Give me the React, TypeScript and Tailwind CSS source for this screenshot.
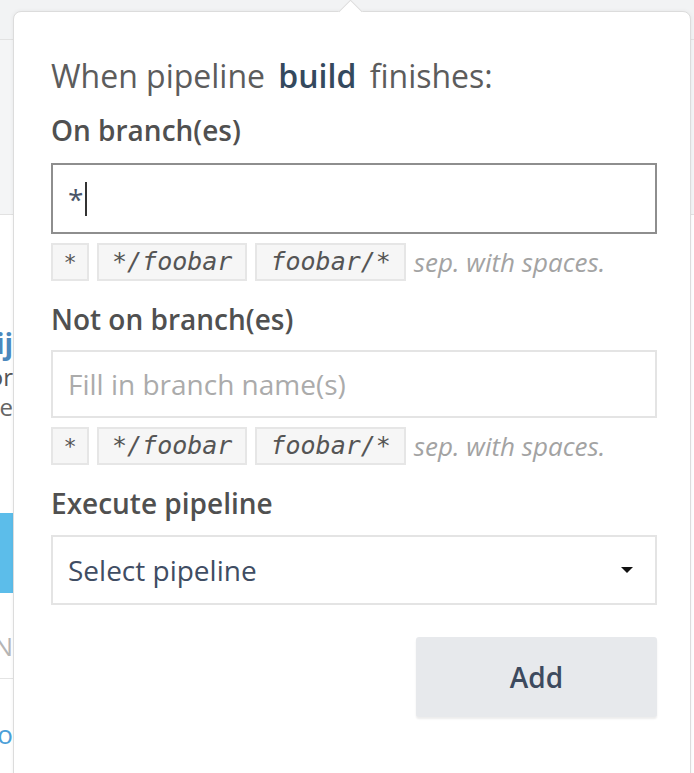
import React from "react";

const sans = { fontFamily: "'Open Sans', 'Noto Sans', sans-serif" };
const mono = { fontFamily: "'DejaVu Sans Mono', 'Liberation Mono', monospace" };

const Chips: React.FC = () => (
    <div className="flex items-center gap-[8px] h-[38px]">
        <span
            style={mono}
            className="h-[38px] w-[38px] flex items-center justify-center bg-[#f6f6f6] border-2 border-[#e6e6e6] text-[#555] italic text-[22px]"
        >
            *
        </span>
        {["*/foobar", "foobar/*"].map((c) => (
            <span
                key={c}
                style={mono}
                className="h-[38px] flex items-center px-[13px] bg-[#f6f6f6] border-2 border-[#e6e6e6] text-[#555] italic text-[25px]"
            >
                {c}
            </span>
        ))}
        <span style={sans} className="italic text-[26px] text-[#a3a3a3]">
            sep. with spaces.
        </span>
    </div>
);

const Label: React.FC<{ children: React.ReactNode; mt: string }> = ({ children, mt }) => (
    <div style={sans} className={`${mt} h-[36px] leading-[36px] text-[28px] font-semibold text-[#505050]`}>
        {children}
    </div>
);

export default function App() {
    return (
        <div className="relative w-[694px] h-[773px] overflow-hidden bg-white">
            {/* page behind the popover */}
            <div style={sans} className="w-[694px] h-[773px] flex flex-col">
                <div className="h-[40px] bg-[#f2f3f4] border-b border-[#e2e2e2]" />
                <div className="h-[175px] bg-[#f4f5f6] border-b border-[#e2e2e2]" />
                <div className="w-[13px] overflow-hidden flex flex-col">
                    <div className="h-[146px] flex items-end justify-end whitespace-nowrap text-[28px] font-bold text-[#4b88bd] leading-[36px]">
                        Pipelij
                    </div>
                    <div className="h-[32px] flex justify-end whitespace-nowrap text-[24px] text-[#555] leading-[32px]">
                        Monitor
                    </div>
                    <div className="h-[28px] flex justify-end whitespace-nowrap text-[24px] text-[#666] leading-[28px]">
                        Pipeline
                    </div>
                    <div className="mt-[92px] h-[80px] bg-[#5cbdea]" />
                    <div className="mt-[33px] h-[40px] flex justify-end whitespace-nowrap text-[26px] text-[#b5b5b5] leading-[40px]">
                        N
                    </div>
                    <div className="h-[13px] border-b border-[#e4e4e4]" />
                    <div className="mt-[37px] h-[36px] flex justify-end whitespace-nowrap text-[26px] text-[#4b9fd8] leading-[36px]">
                        No
                    </div>
                </div>
            </div>

            {/* popover */}
            <div className="absolute left-[13px] top-[11px] w-[678px] h-[800px] bg-white border border-[#dcdcdc] rounded-[8px] shadow-[0_0_4px_rgba(0,0,0,0.06)]">
                <div className="absolute left-[328px] top-[-9px] w-[17px] h-[17px] bg-white border-l border-t border-[#dcdcdc] rotate-45" />
                <div className="relative flex flex-col pl-[37px] pr-[33px] pt-[44px]">
                    <div style={sans} className="h-[40px] leading-[40px] text-[32px] text-[#5c5c5c] whitespace-nowrap">
                        When pipeline <span className="font-semibold text-[#34495e] mx-[5px]">build</span> finishes:
                    </div>

                    <Label mt="mt-[16px]">On branch(es)</Label>
                    <div
                        style={sans}
                        className="mt-[15px] h-[71px] border-2 border-[#8e8e8e] flex items-center pl-[15px] text-[28px] text-[#4a5568]"
                    >
                        *<span className="ml-[2px] w-[2px] h-[34px] bg-[#333]" />
                    </div>
                    <div className="mt-[9px]">
                        <Chips />
                    </div>

                    <Label mt="mt-[20px]">Not on branch(es)</Label>
                    <div
                        style={sans}
                        className="mt-[13px] h-[68px] border-2 border-[#e4e4e4] flex items-center pl-[15px] text-[28px] text-[#ababab]"
                    >
                        Fill in branch name(s)
                    </div>
                    <div className="mt-[9px]">
                        <Chips />
                    </div>

                    <Label mt="mt-[20px]">Execute pipeline</Label>
                    <div
                        style={sans}
                        className="mt-[14px] h-[70px] border-2 border-[#e4e4e4] flex items-center justify-between pl-[15px] pr-[22px] text-[28px] text-[#3f4d63]"
                    >
                        <span>Select pipeline</span>
                        <svg width="12" height="7" viewBox="0 0 12 7">
                            <path d="M0 0 L12 0 L6 6 Z" fill="#111" />
                        </svg>
                    </div>

                    <div className="mt-[32px] flex justify-end">
                        <button
                            style={sans}
                            className="w-[241px] h-[80px] rounded-[3px] bg-[#e7e9ec] shadow-[0_2px_2px_rgba(0,0,0,0.08)] text-[28px] font-semibold text-[#3d4a5e]"
                        >
                            Add
                        </button>
                    </div>
                </div>
            </div>
        </div>
    );
}
